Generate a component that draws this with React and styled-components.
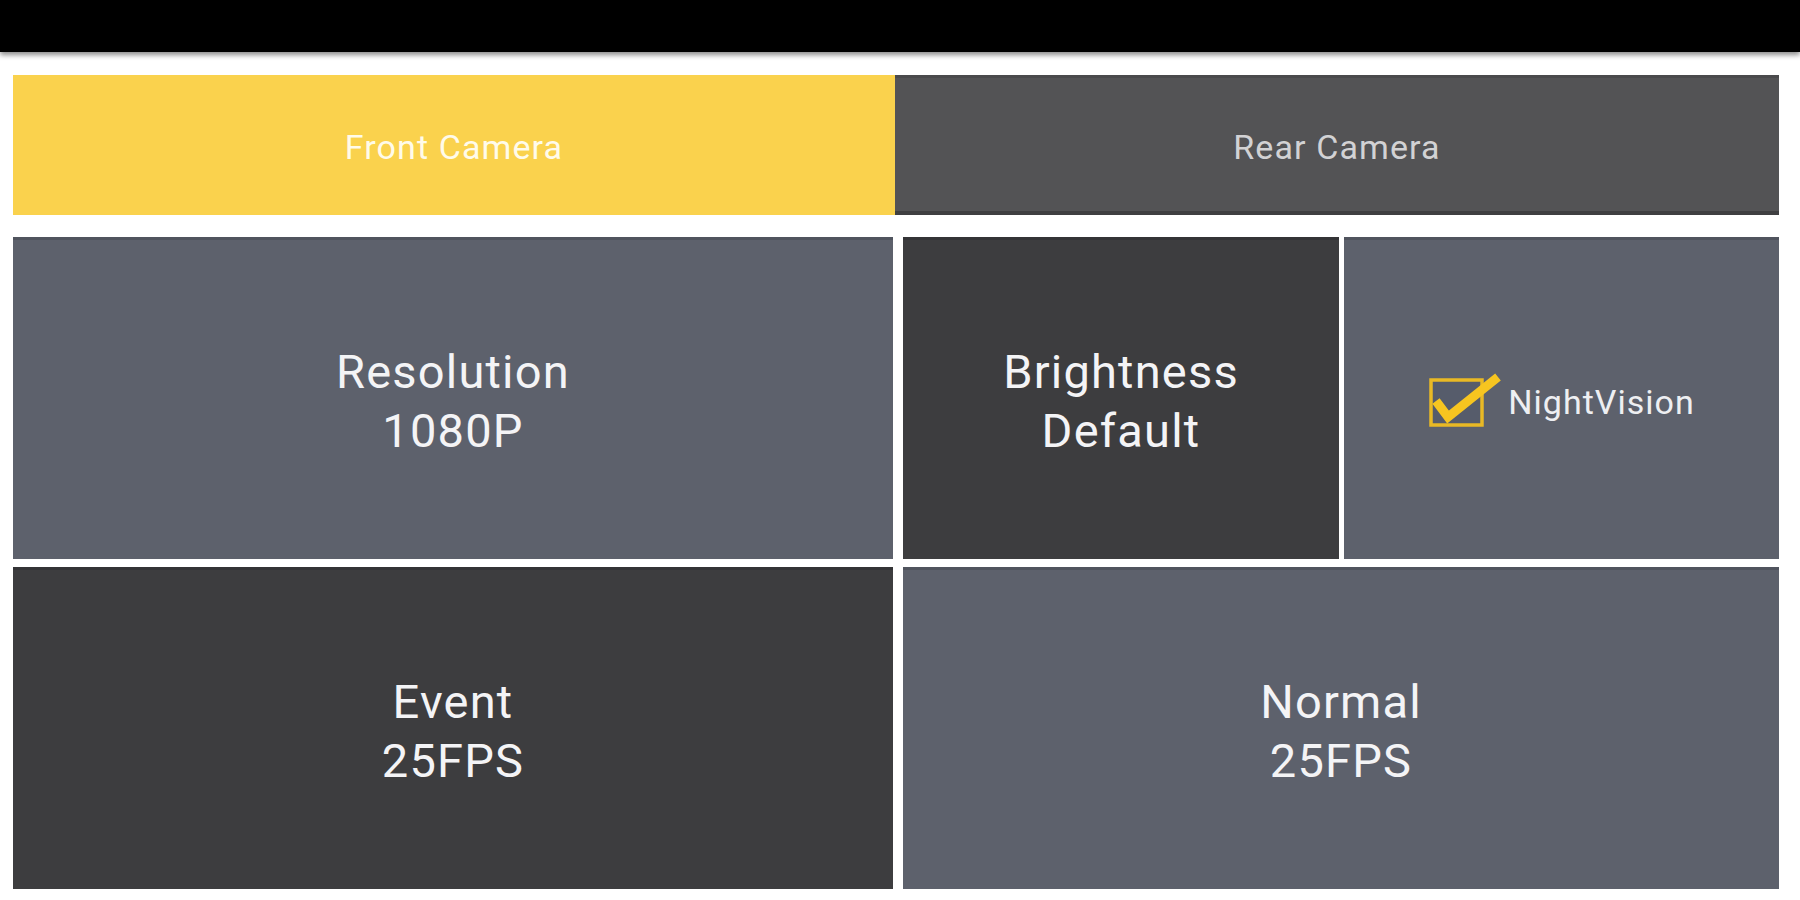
import React from "react";
import styled, { createGlobalStyle } from "styled-components";

const GlobalStyle = createGlobalStyle`
  html, body {
    margin: 0;
    padding: 0;
    background: #ffffff;
  }

  body {
    font-family: Roboto, "Liberation Sans", Arial, sans-serif;
    -webkit-font-smoothing: antialiased;
  }
`;

const Page = styled.div`
  width: 1800px;
  height: 900px;
  overflow: hidden;
  background: #ffffff;
`;

const TopBar = styled.div`
  height: 52px;
  background: #000000;
  box-shadow: 0 3px 5px rgba(0, 0, 0, 0.45);
`;

const Content = styled.div`
  display: flex;
  flex-direction: column;
  padding: 23px 21px 0 13px;
`;

const Tabs = styled.div`
  display: grid;
  grid-template-columns: 882px 1fr;
  height: 140px;
`;

const Tab = styled.div`
  display: flex;
  align-items: center;
  justify-content: center;
  padding-top: 3px;
  background: ${(props) => (props.active ? "#fad24d" : "#535355")};
  color: ${(props) => (props.active ? "#fffbea" : "#d2d2d4")};
  font-size: 34px;
  letter-spacing: 1.1px;
  box-shadow: ${(props) =>
    props.active ? "none" : "inset 0 -4px 0 #3f3f41, inset 0 3px 0 #4a4a4c"};
`;

const Grid = styled.div`
  display: grid;
  grid-template-columns: 880px 1fr;
  grid-template-rows: 322px 322px;
  column-gap: 10px;
  row-gap: 8px;
  margin-top: 22px;
`;

const Split = styled.div`
  display: grid;
  grid-template-columns: 436px 1fr;
  column-gap: 5px;
`;

const Cell = styled.div`
  display: flex;
  flex-direction: column;
  align-items: center;
  justify-content: center;
  padding-top: 5px;
  background: ${(props) => (props.dark ? "#3d3d3f" : "#5d616c")};
  box-shadow: inset 0 3px 0 ${(props) => (props.dark ? "#343436" : "#50545e")};
  color: #f4f4f6;
  font-size: 47px;
  line-height: 59px;
  letter-spacing: 1.2px;
  text-align: center;
`;

const CheckRow = styled.div`
  display: flex;
  align-items: center;
  gap: 6px;
`;

const CheckLabel = styled.span`
  color: #eeeff2;
  font-size: 34px;
  letter-spacing: 1px;
  margin-top: 4px;
`;

const CheckIcon = () => (
  <svg width="74" height="56" viewBox="0 0 74 56">
    <rect
      x="3"
      y="7"
      width="51"
      height="45"
      fill="#565c6b"
      stroke="#e9b925"
      strokeWidth="3.5"
    />
    <path
      d="M8 28 L20 44 L70 4"
      fill="none"
      stroke="#f7c520"
      strokeWidth="9"
      strokeLinejoin="miter"
    />
  </svg>
);

const App = () => {
  return (
    <Page>
      <GlobalStyle />
      <TopBar />
      <Content>
        <Tabs>
          <Tab active>Front Camera</Tab>
          <Tab>Rear Camera</Tab>
        </Tabs>
        <Grid>
          <Cell>
            <div>Resolution</div>
            <div>1080P</div>
          </Cell>
          <Split>
            <Cell dark>
              <div>Brightness</div>
              <div>Default</div>
            </Cell>
            <Cell>
              <CheckRow>
                <CheckIcon />
                <CheckLabel>NightVision</CheckLabel>
              </CheckRow>
            </Cell>
          </Split>
          <Cell dark>
            <div>Event</div>
            <div>25FPS</div>
          </Cell>
          <Cell>
            <div>Normal</div>
            <div>25FPS</div>
          </Cell>
        </Grid>
      </Content>
    </Page>
  );
};

export default App;
